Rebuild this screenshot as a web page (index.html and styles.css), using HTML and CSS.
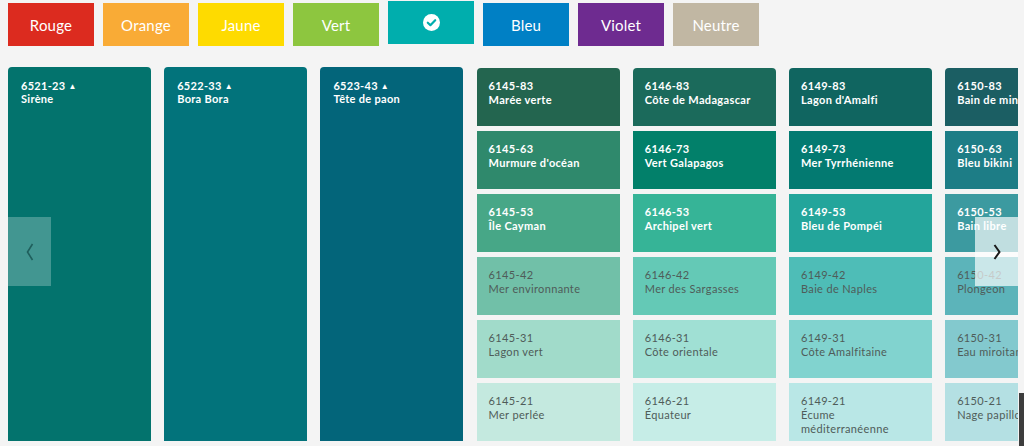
FILE: index.html
```
<!DOCTYPE html>
<html lang="fr">

<head>
    <meta charset="UTF-8">
    <meta name="viewport" content="width=device-width, initial-scale=1.0">
    <title>Nuancier</title>
    <link rel="stylesheet" href="styles.css">
</head>

<body>
    <div class="families">
        <a class="family rouge">Rouge</a>
        <a class="family orange">Orange</a>
        <a class="family jaune">Jaune</a>
        <a class="family vert">Vert</a>
        <a class="family turquoise active">
            <svg width="17" height="17" viewBox="0 0 17 17">
                <circle cx="8.5" cy="8.5" r="8.5" fill="#fff" />
                <path d="M4.8 8.7 L7.4 11.2 L12.2 6.2" fill="none" stroke="#00aead" stroke-width="2.2" stroke-linecap="round" stroke-linejoin="round" />
            </svg>
        </a>
        <a class="family bleu">Bleu</a>
        <a class="family violet">Violet</a>
        <a class="family neutre">Neutre</a>
    </div>

    <div class="palette">
        <div class="strip">
            <div class="feature" style="background:#03736d">
                <span class="code">6521-23 <i>▲</i></span>
                <span class="name">Sirène</span>
            </div>
            <div class="feature" style="background:#02737b">
                <span class="code">6522-33 <i>▲</i></span>
                <span class="name">Bora Bora</span>
            </div>
            <div class="feature" style="background:#03657a">
                <span class="code">6523-43 <i>▲</i></span>
                <span class="name">Tête de paon</span>
            </div>

            <div class="family-col">
                <div class="chip dark" style="background:#23654f"><span>6145-83</span><span>Marée verte</span></div>
                <div class="chip dark" style="background:#2f896c"><span>6145-63</span><span>Murmure d'océan</span></div>
                <div class="chip dark" style="background:#47a787"><span>6145-53</span><span>Île Cayman</span></div>
                <div class="chip light" style="background:#71c0a8"><span>6145-42</span><span>Mer environnante</span></div>
                <div class="chip light" style="background:#a1dbca"><span>6145-31</span><span>Lagon vert</span></div>
                <div class="chip light" style="background:#c4e9df"><span>6145-21</span><span>Mer perlée</span></div>
            </div>
            <div class="family-col">
                <div class="chip dark" style="background:#1b6a5b"><span>6146-83</span><span>Côte de Madagascar</span></div>
                <div class="chip dark" style="background:#02806a"><span>6146-73</span><span>Vert Galapagos</span></div>
                <div class="chip dark" style="background:#36b497"><span>6146-53</span><span>Archipel vert</span></div>
                <div class="chip light" style="background:#64c9b6"><span>6146-42</span><span>Mer des Sargasses</span></div>
                <div class="chip light" style="background:#a0e0d4"><span>6146-31</span><span>Côte orientale</span></div>
                <div class="chip light" style="background:#c6ede7"><span>6146-21</span><span>Équateur</span></div>
            </div>
            <div class="family-col">
                <div class="chip dark" style="background:#106560"><span>6149-83</span><span>Lagon d'Amalfi</span></div>
                <div class="chip dark" style="background:#037a71"><span>6149-73</span><span>Mer Tyrrhénienne</span></div>
                <div class="chip dark" style="background:#23a59b"><span>6149-53</span><span>Bleu de Pompéi</span></div>
                <div class="chip light" style="background:#4ebdb7"><span>6149-42</span><span>Baie de Naples</span></div>
                <div class="chip light" style="background:#81d3cf"><span>6149-31</span><span>Côte Amalfitaine</span></div>
                <div class="chip light" style="background:#b9e7e6"><span>6149-21</span><span>Écume méditerranéenne</span></div>
            </div>
            <div class="family-col">
                <div class="chip dark" style="background:#1b5e63"><span>6150-83</span><span>Bain de minuit</span></div>
                <div class="chip dark" style="background:#1d7d86"><span>6150-63</span><span>Bleu bikini</span></div>
                <div class="chip dark" style="background:#3c9aa0"><span>6150-53</span><span>Bain libre</span></div>
                <div class="chip light" style="background:#5cb4ba"><span>6150-42</span><span>Plongeon</span></div>
                <div class="chip light" style="background:#83c9ce"><span>6150-31</span><span>Eau miroitante</span></div>
                <div class="chip light" style="background:#b4e0e3"><span>6150-21</span><span>Nage papillon</span></div>
            </div>
        </div>

        <button class="nav prev">
            <svg width="8" height="18" viewBox="0 0 8 18">
                <path d="M6.5 1 L1.5 9 L6.5 17" fill="none" stroke="#1f5f5c" stroke-width="1.6" />
            </svg>
        </button>
        <button class="nav next">
            <svg width="8" height="16" viewBox="0 0 8 16">
                <path d="M1.5 1 L6.5 8 L1.5 15" fill="none" stroke="#1a1a1a" stroke-width="2" />
            </svg>
        </button>
    </div>

    <div class="side-tab"></div>
</body>

</html>
```

FILE: styles.css
```
body {
    margin: 0;
    background-color: #f4f4f4;
    font-family: Lato, "Liberation Sans", sans-serif;
    height: 446px;
    overflow: hidden;
}

.families {
    display: flex;
    gap: 9px;
    padding: 3px 0 0 8px;
}

.family {
    width: 86px;
    height: 43px;
    display: flex;
    align-items: center;
    justify-content: center;
    color: #fff;
    font-size: 15px;
    letter-spacing: 0.2px;
    cursor: pointer;
}

.family.active {
    margin-top: -2px;
}

.rouge { background-color: #dc2b1f; }
.orange { background-color: #f9ab36; }
.jaune { background-color: #fedb00; }
.vert { background-color: #8dc63f; }
.turquoise { background-color: #00aead; }
.bleu { background-color: #0080c5; }
.violet { background-color: #6e2b90; }
.neutre { background-color: #c1b7a3; }

.palette {
    position: relative;
    margin: 21px 0 0 8px;
    width: 1010px;
    height: 374px;
    overflow: hidden;
}

.strip {
    display: flex;
    gap: 13.2px;
    height: 100%;
}

.feature {
    flex: 0 0 143px;
    border-radius: 4px 4px 0 0;
    padding: 13px 13px;
    box-sizing: border-box;
    color: #fff;
    font-size: 11px;
    font-weight: 700;
    line-height: 11px;
    letter-spacing: 0.3px;
}

.feature span {
    display: block;
}

.feature i {
    font-style: normal;
    font-size: 8px;
    position: relative;
    top: -1px;
}

.family-col {
    flex: 0 0 143px;
    display: flex;
    flex-direction: column;
    gap: 5px;
    padding-top: 1px;
}

.chip {
    height: 58px;
    box-sizing: border-box;
    padding: 11px 12px 0;
    font-size: 11px;
    line-height: 14px;
    letter-spacing: 0.35px;
    white-space: normal;
}

.chip:first-child {
    border-radius: 4px 4px 0 0;
}

.chip span {
    display: block;
}

.chip.dark {
    color: #fff;
    font-weight: 700;
}

.chip.light {
    color: #4f5c59;
}

.family-col:last-child .chip {
    white-space: nowrap;
}

.nav {
    position: absolute;
    top: 150px;
    width: 43px;
    height: 69px;
    border: none;
    padding: 0;
    display: flex;
    align-items: center;
    justify-content: center;
    cursor: pointer;
}

.prev {
    left: 0;
    background-color: rgba(255, 255, 255, 0.25);
}

.next {
    right: 0;
    background-color: rgba(255, 255, 255, 0.68);
}

.side-tab {
    position: fixed;
    right: 0;
    bottom: 0;
    width: 5px;
    height: 53px;
    background-color: #3d3d3d;
}
```
